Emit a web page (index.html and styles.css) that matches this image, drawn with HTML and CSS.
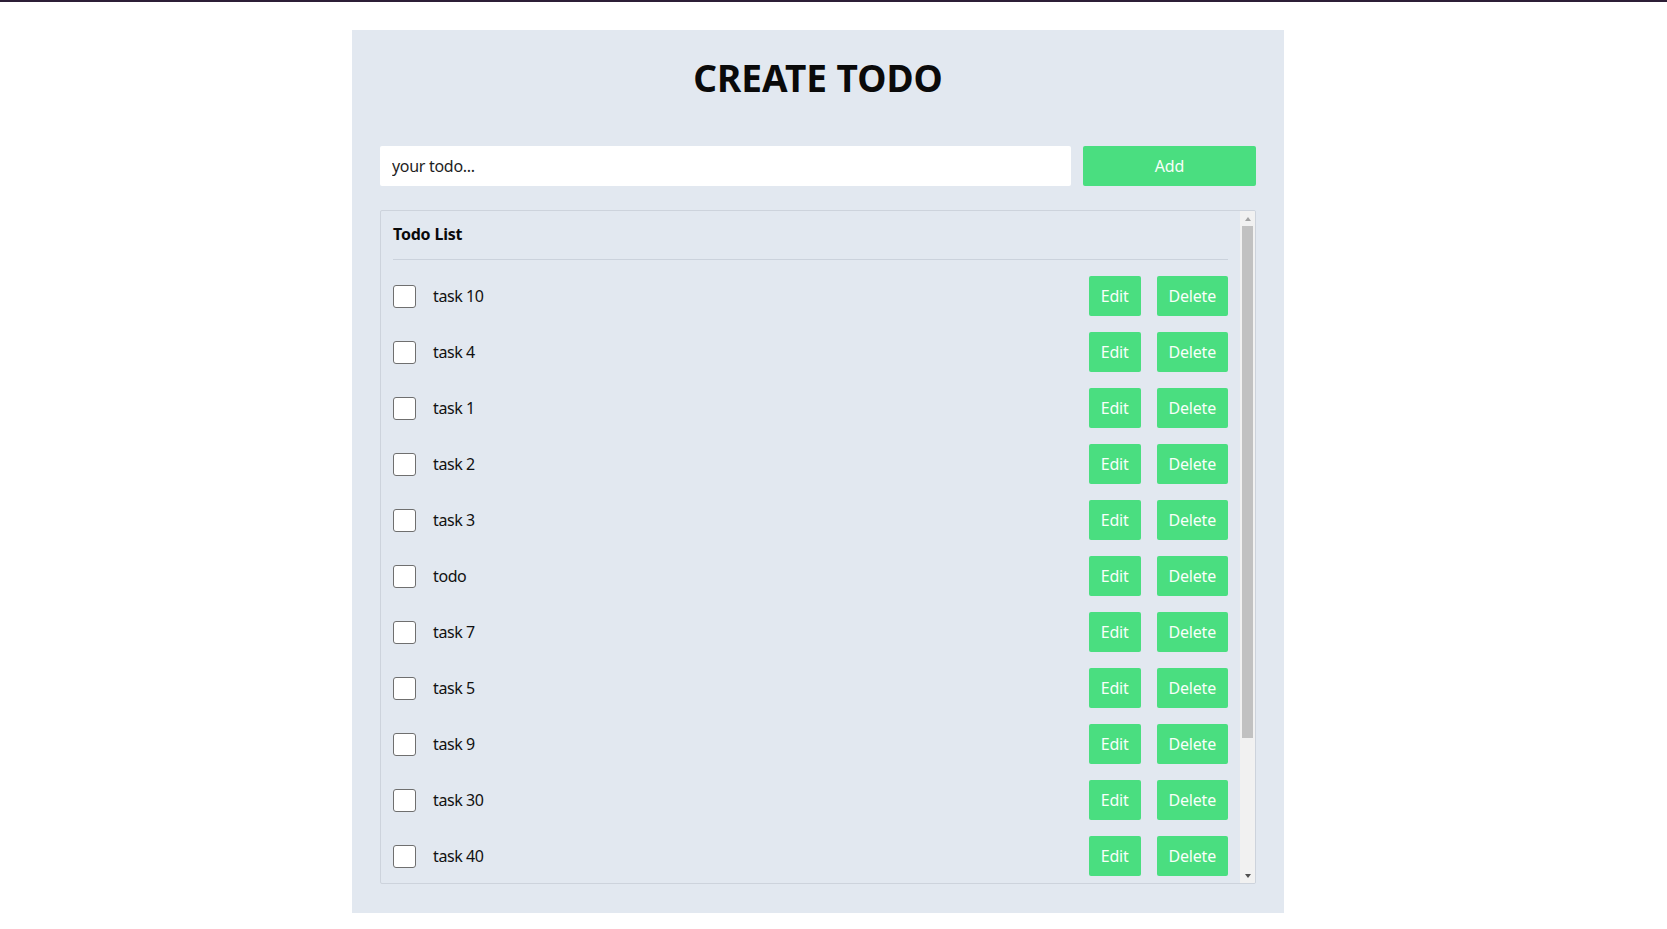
FILE: index.html
```html
<!DOCTYPE html>
<html lang="en">
<head>
<meta charset="utf-8">
<title>Create Todo</title>
<link rel="stylesheet" href="styles.css">
</head>
<body>
<div class="topbar"></div>
<main class="page">
  <section class="card">
    <h1 class="title">CREATE TODO</h1>
    <form class="add-form" onsubmit="return false">
      <input class="todo-input" type="text" placeholder="your todo...">
      <button class="btn btn-add" type="submit">Add</button>
    </form>
    <div class="list-box">
      <div class="list-scroll">
        <h2 class="list-heading">Todo List</h2>
        <ul class="todo-list">
          <li class="todo-row"><input class="check" type="checkbox"><span class="todo-text">task 10</span><button class="btn">Edit</button><button class="btn">Delete</button></li>
          <li class="todo-row"><input class="check" type="checkbox"><span class="todo-text">task 4</span><button class="btn">Edit</button><button class="btn">Delete</button></li>
          <li class="todo-row"><input class="check" type="checkbox"><span class="todo-text">task 1</span><button class="btn">Edit</button><button class="btn">Delete</button></li>
          <li class="todo-row"><input class="check" type="checkbox"><span class="todo-text">task 2</span><button class="btn">Edit</button><button class="btn">Delete</button></li>
          <li class="todo-row"><input class="check" type="checkbox"><span class="todo-text">task 3</span><button class="btn">Edit</button><button class="btn">Delete</button></li>
          <li class="todo-row"><input class="check" type="checkbox"><span class="todo-text">todo</span><button class="btn">Edit</button><button class="btn">Delete</button></li>
          <li class="todo-row"><input class="check" type="checkbox"><span class="todo-text">task 7</span><button class="btn">Edit</button><button class="btn">Delete</button></li>
          <li class="todo-row"><input class="check" type="checkbox"><span class="todo-text">task 5</span><button class="btn">Edit</button><button class="btn">Delete</button></li>
          <li class="todo-row"><input class="check" type="checkbox"><span class="todo-text">task 9</span><button class="btn">Edit</button><button class="btn">Delete</button></li>
          <li class="todo-row"><input class="check" type="checkbox"><span class="todo-text">task 30</span><button class="btn">Edit</button><button class="btn">Delete</button></li>
          <li class="todo-row"><input class="check" type="checkbox"><span class="todo-text">task 40</span><button class="btn">Edit</button><button class="btn">Delete</button></li>
        </ul>
      </div>
      <div class="scrollbar" aria-hidden="true">
        <div class="sb-btn"><span class="arrow-up"></span></div>
        <div class="sb-track"><div class="sb-thumb"></div></div>
        <div class="sb-btn"><span class="arrow-down"></span></div>
      </div>
    </div>
  </section>
</main>
</body>
</html>
```

FILE: styles.css
```css
* {
  box-sizing: border-box;
}

html, body {
  margin: 0;
  padding: 0;
  background: #ffffff;
}

body {
  font-family: "Noto Sans", "Open Sans", sans-serif;
  font-size: 16px;
  color: #111111;
}

.topbar {
  height: 2px;
  background: #2c1e36;
}

.page {
  padding-top: 28px;
  padding-left: 352px;
}

.card {
  width: 932px;
  height: 883px;
  background: #e2e8f0;
  padding: 28px 28px 28px 28px;
  display: flex;
  flex-direction: column;
}

.title {
  margin: 2px 0 0 0;
  text-align: center;
  font-size: 37px;
  line-height: 36px;
  font-weight: 700;
  color: #0a0a0a;
}

.add-form {
  display: flex;
  gap: 12px;
  margin-top: 50px;
}

.todo-input {
  flex: 1;
  height: 40px;
  border: none;
  border-radius: 2px;
  background: #ffffff;
  padding: 0 12px;
  font-family: inherit;
  font-size: 16px;
  letter-spacing: -0.3px;
  color: #111111;
  outline: none;
}

.todo-input::placeholder {
  color: #1e1e1e;
  opacity: 1;
}

.btn {
  height: 40px;
  border: none;
  border-radius: 2px;
  background: #4ade80;
  color: #f7fff9;
  font-family: inherit;
  font-size: 16px;
  letter-spacing: -0.2px;
  padding: 0 12px;
  cursor: pointer;
}

.btn-add {
  width: 173px;
}

.list-box {
  margin-top: 24px;
  height: 674px;
  border: 1px solid #cdd3dc;
  border-radius: 2px;
  display: flex;
  overflow: hidden;
}

.list-scroll {
  flex: 1;
  min-width: 0;
  padding: 12px;
  overflow: hidden;
}

.scrollbar {
  width: 15px;
  flex: none;
  background: #f1f1f1;
  display: flex;
  flex-direction: column;
}

.sb-btn {
  height: 15px;
  flex: none;
  display: flex;
  align-items: center;
  justify-content: center;
}

.arrow-up {
  width: 0;
  height: 0;
  border-left: 3.5px solid transparent;
  border-right: 3.5px solid transparent;
  border-bottom: 4px solid #a3a3a3;
}

.arrow-down {
  width: 0;
  height: 0;
  border-left: 3.5px solid transparent;
  border-right: 3.5px solid transparent;
  border-top: 4px solid #505050;
}

.sb-track {
  flex: 1;
  padding: 0 2px;
}

.sb-thumb {
  height: 512px;
  background: #c1c1c1;
}

.list-heading {
  margin: 0 0 16px 0;
  padding-bottom: 14px;
  border-bottom: 1px solid #cbd2dc;
  font-size: 16px;
  font-weight: 700;
  line-height: 22px;
  letter-spacing: -0.2px;
  color: #0a0a0a;
}

.todo-list {
  list-style: none;
  margin: 0;
  padding: 0;
  display: flex;
  flex-direction: column;
  gap: 16px;
}

.todo-row {
  display: flex;
  align-items: center;
  gap: 16px;
  height: 40px;
  flex: none;
}

.check {
  appearance: none;
  -webkit-appearance: none;
  margin: 0 1px 0 0;
  width: 23px;
  height: 23px;
  border: 1px solid #6f6f6f;
  border-radius: 3px;
  background: #ffffff;
  flex: none;
}

.todo-text {
  flex: 1;
  letter-spacing: -0.4px;
  color: #111111;
}
```
